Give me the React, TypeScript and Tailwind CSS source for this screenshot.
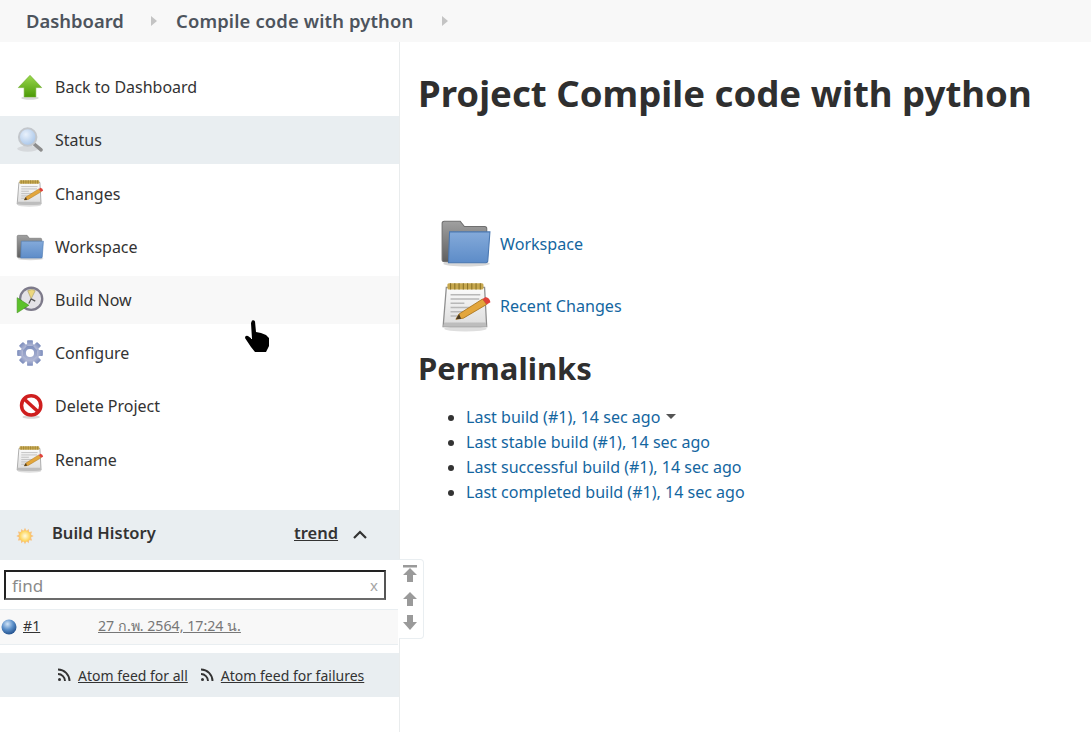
import { useId } from "react";

type IconProps = { size?: number };

const ArrowUpIcon = ({ size = 28 }: IconProps) => {
  const id = useId();
  return (
    <svg width={size} height={size} viewBox="0 0 48 48">
      <defs>
        <linearGradient id={id} x1="0" y1="0" x2="0" y2="1">
          <stop offset="0" stopColor="#9ad84e" />
          <stop offset="1" stopColor="#4c9a06" />
        </linearGradient>
      </defs>
      <ellipse cx="24" cy="43" rx="15" ry="3" fill="#d8d8d8" />
      <path d="M24 4 L44 25 H34 V41 H14 V25 H4 Z" fill={`url(#${id})`} stroke="#6bab28" strokeWidth="1" />
    </svg>
  );
};

const SearchIcon = ({ size = 28 }: IconProps) => {
  const id = useId();
  return (
    <svg width={size} height={size} viewBox="0 0 48 48">
      <defs>
        <radialGradient id={id} cx="0.4" cy="0.35" r="0.7">
          <stop offset="0" stopColor="#e9f1fb" />
          <stop offset="1" stopColor="#a4c3e8" />
        </radialGradient>
      </defs>
      <ellipse cx="20" cy="39" rx="18" ry="5" fill="#d6d9dc" />
      <path d="M30 30 L43 41" stroke="#8d8d8d" strokeWidth="6" strokeLinecap="round" />
      <circle cx="20" cy="19" r="15" fill={`url(#${id})`} stroke="#c3c7cc" strokeWidth="3.5" />
    </svg>
  );
};

const NotepadIcon = ({ size = 28 }: IconProps) => {
  const id = useId();
  return (
    <svg width={size} height={size} viewBox="0 0 48 48">
      <defs>
        <linearGradient id={id} x1="0" y1="0" x2="0" y2="1">
          <stop offset="0" stopColor="#fbfbfb" />
          <stop offset="1" stopColor="#dcdcdc" />
        </linearGradient>
      </defs>
      <ellipse cx="23" cy="45" rx="20" ry="2.500" fill="#dedede" />
      <path d="M5 6 H41 L43 43 H2 Z" fill={`url(#${id})`} stroke="#8f8f8f" strokeWidth="1.200" />
      <path d="M3 39 H42 L43 43 H2 Z" fill="#bdbdbd" />
      <rect x="6" y="2" width="34" height="6" rx="1.500" fill="#c7a84e" />
      <path d="M9 2v6M13 2v6M17 2v6M21 2v6M25 2v6M29 2v6M33 2v6M37 2v6" stroke="#8a7229" strokeWidth="1" />
      <path d="M9 13 H37 M9 17 H36 M9 21 H22 M9 25 H30 M9 29 H22 M9 33 H24" stroke="#b8b8b8" strokeWidth="1.400" />
      <path d="M14 36 L17 31 L39 17 L43 22 L21 35 Z" fill="#e3a63c" stroke="#a9741d" strokeWidth="0.800" />
      <path d="M39 17 L42 15 Q46 16 46.500 20 L43 22 Z" fill="#e0413a" />
      <path d="M14 36 L17 31 L19 35.500 Z" fill="#4a3a22" />
    </svg>
  );
};

const FolderIcon = ({ size = 28 }: IconProps) => {
  const id = useId();
  const backId = useId();
  return (
    <svg width={size} height={size} viewBox="0 0 48 48">
      <defs>
        <linearGradient id={id} x1="0" y1="0" x2="0" y2="1">
          <stop offset="0" stopColor="#84aada" />
          <stop offset="1" stopColor="#5d8cc8" />
        </linearGradient>
        <linearGradient id={backId} x1="0" y1="0" x2="0" y2="1">
          <stop offset="0" stopColor="#a0a0a0" />
          <stop offset="1" stopColor="#5f5f5f" />
        </linearGradient>
      </defs>
      <ellipse cx="25" cy="44" rx="22" ry="2.500" fill="#d8d8d8" />
      <path d="M2 6 Q2 4 4 4 H19 L23 9 H42 Q44 9 44 11 V42 H4 Q2 42 2 40 Z" fill={`url(#${backId})`} stroke="#6f6f6f" />
      <path d="M9 14 H47 L45 41 Q45 43 43 43 H8 Z" fill={`url(#${id})`} stroke="#4a78b2" strokeWidth="1" />
    </svg>
  );
};

const BuildIcon = ({ size = 28 }: IconProps) => (
  <svg width={size} height={size} viewBox="0 0 48 48">
    <circle cx="26" cy="22" r="19" fill="#e4e2e6" stroke="#7d7a8a" strokeWidth="4" />
    <path d="M26 22 L20 8 Q28 4 33 8 Z" fill="#ecd77e" stroke="#8f8755" strokeWidth="0.800" />
    <path d="M26 22 L33 26 M26 22 L22 30" stroke="#555" strokeWidth="2.200" />
    <path d="M2 20 L22 33 L2 46 Z" fill="#5cc22b" stroke="#3a8d12" strokeWidth="1" />
  </svg>
);

const GearIcon = ({ size = 28 }: IconProps) => {
  const id = useId();
  return (
    <svg width={size} height={size} viewBox="0 0 48 48">
      <defs>
        <linearGradient id={id} x1="0" y1="0" x2="0" y2="1">
          <stop offset="0" stopColor="#7a8bbb" />
          <stop offset="1" stopColor="#b4bad6" />
        </linearGradient>
      </defs>
      <g fill={`url(#${id})`}>
        <circle cx="24" cy="24" r="16" />
        {[0, 45, 90, 135, 180, 225, 270, 315].map((deg) => (
          <rect key={deg} x="19" y="2" width="10" height="10" rx="1.500" transform={`rotate(${deg} 24 24)`} />
        ))}
      </g>
      <circle cx="24" cy="24" r="7" fill="#ffffff" />
    </svg>
  );
};

const NoEntryIcon = ({ size = 28 }: IconProps) => (
  <svg width={size} height={size} viewBox="0 0 48 48">
    <ellipse cx="26" cy="43" rx="15" ry="3" fill="#d8d8d8" />
    <circle cx="26" cy="23" r="16.500" fill="#ffffff" stroke="#cf1f1f" strokeWidth="6" />
    <path d="M14 12 L38 34" stroke="#cf1f1f" strokeWidth="6" />
  </svg>
);

const SunIcon = ({ size = 18 }: IconProps) => {
  const id = useId();
  return (
    <svg width={size} height={size} viewBox="0 0 24 24">
      <defs>
        <radialGradient id={id} cx="0.5" cy="0.5" r="0.5">
          <stop offset="0" stopColor="#fffbe0" />
          <stop offset="1" stopColor="#fdd24f" />
        </radialGradient>
      </defs>
      <path
        d="M12 1l2 4 3-2.500.5 4 4-.5-1.500 4 3.500 2-3.500 2 1.500 4-4-.5-.5 4-3-2.500-2 4-2-4-3 2.500-.5-4-4 .5 1.500-4L.5 12 4 10 2.500 6l4 .5.5-4 3 2.500z"
        fill="#f7c27f"
      />
      <circle cx="12" cy="12" r="7.500" fill={`url(#${id})`} />
    </svg>
  );
};

const BallIcon = () => {
  const id = useId();
  return (
    <svg width={16} height={16} viewBox="0 0 16 16">
      <defs>
        <radialGradient id={id} cx="0.4" cy="0.3" r="0.75">
          <stop offset="0" stopColor="#cfe3f7" />
          <stop offset="0.500" stopColor="#5b8fc9" />
          <stop offset="1" stopColor="#1c4a86" />
        </radialGradient>
      </defs>
      <circle cx="8" cy="8" r="7.500" fill={`url(#${id})`} />
    </svg>
  );
};

const RssIcon = () => (
  <svg width={14} height={14} viewBox="0 0 14 14" fill="none" stroke="#333" strokeWidth="1.900">
    <circle cx="2.500" cy="11.500" r="1.500" fill="#333" stroke="none" />
    <path d="M1 6a7 7 0 0 1 7 7" />
    <path d="M1 1.500A11.500 11.500 0 0 1 12.500 13" />
  </svg>
);

const HandCursor = () => (
  <svg width="26" height="34" viewBox="0 0 26 34" className="absolute left-[244px] top-[319px]">
    <path
      d="M8 1.500 Q10 .5 11 2.500 L12 13 L17 14 L22 16 L25 19 L25 27 L22 33 L11 33 L7 28 L1 19 Q1 16 4 17 L8 20 L7 4 Z"
      fill="#000"
    />
  </svg>
);

const ScrollArrow = ({ bar, down }: { bar?: boolean; down?: boolean }) => (
  <svg width="16" height="20" viewBox="0 0 16 20">
    {bar && <rect x="1" y="1" width="14" height="2.500" fill="#9a9a9a" />}
    <path
      d={down ? "M5 3 H11 V10 H15 L8 18 L1 10 H5 Z" : "M8 4 L15 11 H11 V18 H5 V11 H1 Z"}
      fill="#9a9a9a"
    />
  </svg>
);

const menu = [
  { label: "Back to Dashboard", icon: <ArrowUpIcon />, cls: "" },
  { label: "Status", icon: <SearchIcon />, cls: "bg-[#e9eef1]" },
  { label: "Changes", icon: <NotepadIcon />, cls: "" },
  { label: "Workspace", icon: <FolderIcon />, cls: "" },
  { label: "Build Now", icon: <BuildIcon />, cls: "bg-[#f8f8f8]" },
  { label: "Configure", icon: <GearIcon />, cls: "" },
  { label: "Delete Project", icon: <NoEntryIcon />, cls: "" },
  { label: "Rename", icon: <NotepadIcon />, cls: "" },
];

const permalinks = [
  "Last build (#1), 14 sec ago",
  "Last stable build (#1), 14 sec ago",
  "Last successful build (#1), 14 sec ago",
  "Last completed build (#1), 14 sec ago",
];

const App = () => {
  return (
    <div className="relative h-[732px] overflow-hidden bg-white text-[#333] font-['Noto_Sans','Open_Sans',sans-serif]">
      <div className="h-[42px] flex items-center bg-[#f8f8f8] text-[#4d545d] font-semibold text-[18.400px]">
        <span className="ml-[26px] w-[125px]">Dashboard</span>
        <span className="w-[25px]">
          <svg width="6" height="10" viewBox="0 0 6 10" className="fill-[#c4c4c4]">
            <path d="M0 0 L6 5 L0 10 Z" />
          </svg>
        </span>
        <span className="w-[266px] tracking-[0.150px]">Compile code with python</span>
        <svg width="6" height="10" viewBox="0 0 6 10" className="fill-[#c4c4c4]">
          <path d="M0 0 L6 5 L0 10 Z" />
        </svg>
      </div>

      <div className="flex h-[690px]">
        <aside className="relative w-[400px] shrink-0 border-r border-[#e9eced]">
          <div className="pt-[21px] flex flex-col gap-[5.200px]">
            {menu.map((item) => (
              <div key={item.label} className={`h-[48px] flex items-center text-[16px] ${item.cls}`}>
                <span className="w-[55px] pl-[16px] flex shrink-0">{item.icon}</span>
                <span className="whitespace-nowrap pt-[0.500px]">{item.label}</span>
              </div>
            ))}
          </div>

          <div className="mt-[27px] h-[50px] pb-[3px] flex items-center bg-[#e9eef1] font-semibold text-[16.500px] text-[#333]">
            <span className="ml-[16px] w-[36px] pt-[5px]">
              <SunIcon />
            </span>
            <span className="w-[242px]">Build History</span>
            <a className="underline w-[59px]">trend</a>
            <svg width="14" height="10" viewBox="0 0 14 10" fill="none" stroke="#333" strokeWidth="2.200" className="mt-[3px]">
              <path d="M1 8 L7 2 L13 8" />
            </svg>
          </div>

          <div className="mx-[4px] mt-[10px] w-[382px] h-[30px] flex items-center justify-between pl-[6px] pr-[6px] border-2 border-t-[#222] border-l-[#222] border-r-[#555] border-b-[#6b6b6b] text-[#8a8a8a] text-[17px]">
            <span>find</span>
            <span className="text-[15px] text-[#a5a5a5]">x</span>
          </div>

          <div className="mt-[9px] h-[36px] w-[398px] pb-[4px] flex items-center bg-[#f8f8f8] border-y border-[#e9eef1] text-[14.200px]">
            <span className="ml-[1px] w-[22px] pt-[4px]">
              <BallIcon />
            </span>
            <a className="underline text-[#333] w-[75px]">#1</a>
            <a className="underline text-[#777]">27 ก.พ. 2564, 17:24 น.</a>
          </div>

          <div className="mt-[8px] h-[44px] flex items-center pl-[57px] bg-[#e9eef1] text-[14px] text-[#333]">
            <RssIcon />
            <a className="underline ml-[7px]">Atom feed for all</a>
            <span className="ml-[12px]">
              <RssIcon />
            </span>
            <a className="underline ml-[7px]">Atom feed for failures</a>
          </div>
        </aside>

        <main className="flex-1 pl-[18px]">
          <h1 className="mt-[23px] h-[56px] text-[36.600px] leading-[56px] font-bold text-[#2f2f2f] whitespace-nowrap">
            Project Compile code with python
          </h1>
          <div className="mt-[97px] ml-[23px] flex flex-col gap-[10px] text-[16.100px] text-[#14669f]">
            <div className="h-[52px] flex items-center gap-[8px]">
              <span className="mb-[4px] -ml-[1px] mr-[1px]">
                <FolderIcon size={51} />
              </span>
              <a>Workspace</a>
            </div>
            <div className="h-[52px] flex items-center gap-[8px]">
              <NotepadIcon size={51} />
              <a>Recent Changes</a>
            </div>
          </div>
          <h2 className="mt-[14px] h-[44px] leading-[44px] text-[31px] font-bold text-[#2f2f2f]">Permalinks</h2>
          <ul className="mt-[15px] pl-[48px] list-disc text-[16.050px] leading-[25px] text-[#14669f] marker:text-[#333]">
            {permalinks.map((link, i) => (
              <li key={link}>
                <a>{link}</a>
                {i === 0 && (
                  <svg width="10" height="6" viewBox="0 0 10 6" className="inline ml-[6px] mb-[4px] fill-[#555]">
                    <path d="M0 0 H10 L5 5 Z" />
                  </svg>
                )}
              </li>
            ))}
          </ul>
        </main>
      </div>

      {/* floating scroll buttons, sit over the sidebar edge */}
      <div className="absolute left-[399px] top-[559px] w-[25px] h-[80px] pr-[2px] flex flex-col items-center justify-center gap-[4px] pb-[3px] border border-l-0 border-[#e9eef1] rounded-r-[4px] bg-white">
        <ScrollArrow bar />
        <ScrollArrow />
        <ScrollArrow down />
      </div>

      <HandCursor />
    </div>
  );
};

export default App;
